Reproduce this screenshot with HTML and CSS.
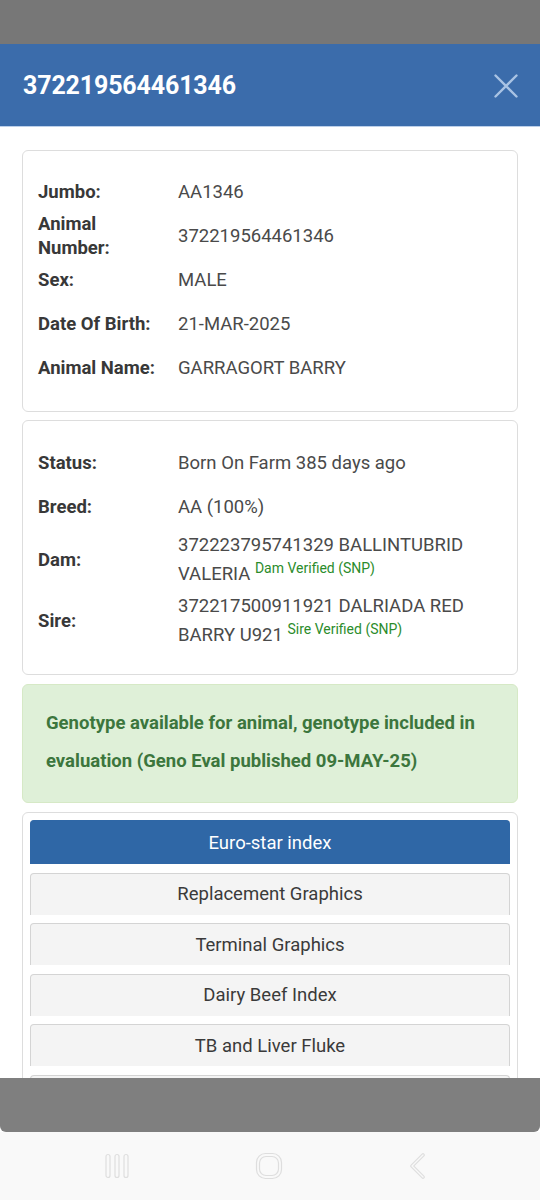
FILE: index.html
```html
<!DOCTYPE html>
<html>
<head>
<meta charset="utf-8">
<link rel="stylesheet" href="styles.css">
</head>
<body>
<div class="screen">
  <div class="scrim-top"></div>
  <div class="modal">
    <div class="modal-header">
      <h1 class="modal-title">372219564461346</h1>
      <svg class="close" width="24" height="24" viewBox="0 0 24 24"><path d="M1.5 1.5 L22.5 22.5 M22.5 1.5 L1.5 22.5" stroke="#a9c3e4" stroke-width="2.4" stroke-linecap="round" fill="none"/></svg>
    </div>
    <div class="modal-body">
      <div class="card">
        <div class="row"><div class="label">Jumbo:</div><div class="value">AA1346</div></div>
        <div class="row"><div class="label">Animal<br>Number:</div><div class="value">372219564461346</div></div>
        <div class="row"><div class="label">Sex:</div><div class="value">MALE</div></div>
        <div class="row"><div class="label">Date Of Birth:</div><div class="value">21-MAR-2025</div></div>
        <div class="row"><div class="label">Animal Name:</div><div class="value">GARRAGORT BARRY</div></div>
      </div>
      <div class="card card-2">
        <div class="row"><div class="label">Status:</div><div class="value">Born On Farm 385 days ago</div></div>
        <div class="row"><div class="label">Breed:</div><div class="value">AA (100%)</div></div>
        <div class="row tall"><div class="label">Dam:</div><div class="value">372223795741329 BALLINTUBRID VALERIA <sup class="verified">Dam Verified (SNP)</sup></div></div>
        <div class="row tall"><div class="label">Sire:</div><div class="value">372217500911921 DALRIADA RED BARRY U921 <sup class="verified">Sire Verified (SNP)</sup></div></div>
      </div>
      <div class="alert">Genotype available for animal, genotype included in evaluation (Geno Eval published 09-MAY-25)</div>
      <div class="tabs">
        <div class="tab active">Euro-star index</div>
        <div class="tab">Replacement Graphics</div>
        <div class="tab">Terminal Graphics</div>
        <div class="tab">Dairy Beef Index</div>
        <div class="tab">TB and Liver Fluke</div>
        <div class="tab">&nbsp;</div>
      </div>
    </div>
  </div>
  <div class="scrim-bottom"></div>
  <div class="navbar">
    <svg class="nav-icon" width="26" height="26" viewBox="0 0 26 26">
      <rect x="2" y="1.5" width="4" height="23" rx="2" fill="none" stroke="#dedede" stroke-width="1.2"/>
      <rect x="11" y="1.5" width="4" height="23" rx="2" fill="none" stroke="#dedede" stroke-width="1.2"/>
      <rect x="20" y="1.5" width="4" height="23" rx="2" fill="none" stroke="#dedede" stroke-width="1.2"/>
    </svg>
    <svg class="nav-icon" width="28" height="28" viewBox="0 0 28 28">
      <rect x="1.5" y="1.5" width="25" height="25" rx="9" fill="none" stroke="#dedede" stroke-width="1.2"/>
      <rect x="4.5" y="4.5" width="19" height="19" rx="6.5" fill="none" stroke="#dedede" stroke-width="1.2"/>
    </svg>
    <svg class="nav-icon" width="20" height="26" viewBox="0 0 20 26">
      <path d="M15 2 L4 13 L15 24" fill="none" stroke="#dedede" stroke-width="3.6" stroke-linecap="round" stroke-linejoin="round"/>
      <path d="M15 2 L4 13 L15 24" fill="none" stroke="#f9f9f9" stroke-width="1.4" stroke-linecap="round" stroke-linejoin="round"/>
    </svg>
  </div>
</div>
</body>
</html>
```

FILE: styles.css
```css
* { box-sizing: border-box; }
html, body { margin: 0; padding: 0; }
body {
  font-family: Roboto, "Liberation Sans", sans-serif;
  background: #ffffff;
}
.screen {
  width: 540px;
  height: 1200px;
  display: flex;
  flex-direction: column;
  overflow: hidden;
}
.scrim-top {
  height: 44px;
  flex: none;
  background: #777777;
}
.modal {
  flex: 1;
  overflow: hidden;
  background: #ffffff;
}
.modal-header {
  height: 83px;
  background: #3b6cab;
  border-bottom: 1px solid #bcd0ea;
  display: flex;
  align-items: center;
  justify-content: space-between;
  padding: 0 22px 0 23px;
}
.modal-title {
  margin: 0;
  color: #ffffff;
  font-size: 25px;
  font-weight: 700;
  letter-spacing: -0.15px;
}
.close { display: block; margin-top: 2px; }
.modal-body {
  padding: 23px 22px 0 22px;
  display: flex;
  flex-direction: column;
  gap: 8px;
}
.card {
  border: 1px solid #dddddd;
  border-radius: 6px;
  padding: 19px 15px 21px 15px;
  background: #fff;
}
.card-2 { padding-top: 20px; padding-bottom: 23px; }
.row {
  display: flex;
  align-items: center;
  height: 44px;
}
.row.tall { height: 61px; }
.label {
  width: 140px;
  flex: none;
  font-weight: 700;
  font-size: 18.5px;
  line-height: 24px;
  color: #383838;
}
.value {
  font-size: 18.5px;
  line-height: 24px;
  color: #4a4a4a;
}
.row.tall .value { line-height: 29px; }
.verified {
  font-size: 14px;
  color: #2b8c2b;
  line-height: 0;
  vertical-align: 7px;
}
.alert {
  margin-top: 1px;
  background: #dff0d8;
  border: 1px solid #d6e9c6;
  border-radius: 6px;
  padding: 19px 18px 22px 23px;
  color: #3c763d;
  font-weight: 700;
  font-size: 18.5px;
  line-height: 38px;
}
.tabs {
  margin-top: 1px;
  border: 1px solid #dddddd;
  border-radius: 6px;
  padding: 7px 7px 0 7px;
  display: flex;
  flex-direction: column;
  gap: 8.5px;
  height: 300px;
}
.tab {
  flex: none;
  height: 42px;
  display: flex;
  align-items: center;
  justify-content: center;
  background: #f4f4f4;
  border: 1px solid #d4d4d4;
  border-bottom: none;
  border-radius: 4px 4px 0 0;
  color: #3a3a3a;
  font-size: 18.5px;
}
.tab.active {
  height: 44px;
  background: #2f67a6;
  border-color: #2f67a6;
  color: #ffffff;
}
.scrim-bottom {
  height: 54px;
  flex: none;
  background: #7f7f7f;
  border-radius: 0 0 6px 6px;
}
.navbar {
  height: 68px;
  flex: none;
  background: #f9f9f9;
  display: flex;
  align-items: center;
  justify-content: space-between;
  padding: 0 112px 0 104px;
}
.nav-icon { display: block; }
```
